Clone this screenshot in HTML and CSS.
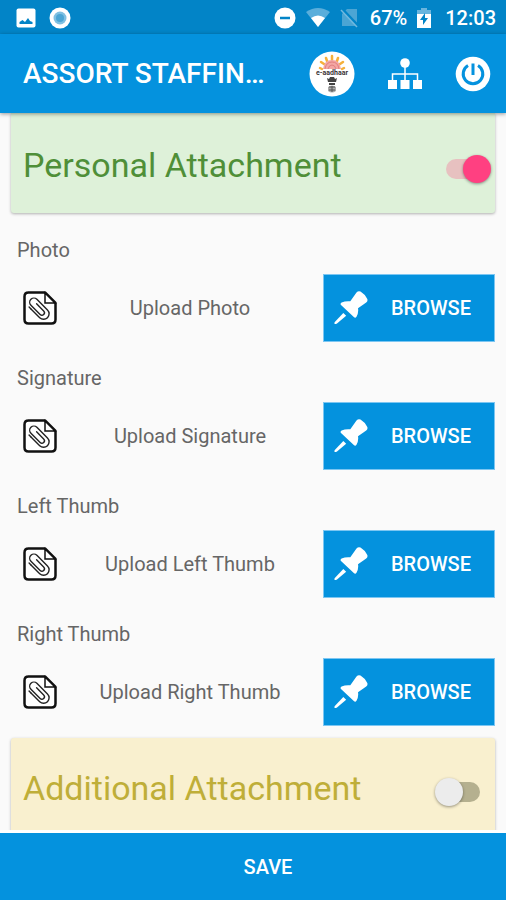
FILE: index.html
```html
<!DOCTYPE html>
<html lang="en">
<head>
<meta charset="utf-8">
<meta name="viewport" content="width=device-width, initial-scale=1">
<title>Attachments</title>
<link rel="stylesheet" href="styles.css">
</head>
<body>
<svg class="sprite" aria-hidden="true">
  <symbol id="file" viewBox="0 0 34 34">
    <path d="M5 1.500H22L32.500 12V28.500Q32.500 32.500 28.500 32.500H5.500Q1.500 32.500 1.500 28.500V5.500Q1.500 1.500 5.500 1.500Z" fill="#fff" stroke="#111" stroke-width="2.500" stroke-linejoin="round"/>
    <path d="M22 2V12H32Z" fill="#fff" stroke="#111" stroke-width="1.500"/>
    <g transform="translate(16 17.500) rotate(-45)" fill="none" stroke="#222" stroke-width="1.400" stroke-linecap="round">
      <path d="M-6-5V7A5.500 5.500 0 0 0 5 7V-8A4.200 4.200 0 0 0-3.400-8V5A2.500 2.500 0 0 0 1.600 5V-5"/>
      <path d="M-6-5V-8"/>
    </g>
  </symbol>
  <symbol id="pin" viewBox="0 0 34 34">
    <path d="M22.500 1.600Q24.200-.6 26.500.5Q30.800 3 33.300 8Q34 10.300 32.200 11.500L24 17.200Q24.800 21.500 22.500 25.800Q21.300 27.400 19.800 26L7 14Q5.800 12.500 7.600 11.500Q11.500 9.800 16.300 10.300Z" fill="#fff"/>
    <path d="M9.300 22L12.200 24.700L3 32.500Q-.2 34.200.6 31.200Z" fill="#fff"/>
  </symbol>
</svg>

<div class="status">
  <div class="status-group">
    <svg width="20" height="20" viewBox="0 0 20 20"><rect x=".5" y=".5" width="19" height="19" rx="2" fill="#fff"/><path d="M3.500 16V14L6.500 12L9 14L12 10L14 13L16.500 14V16Z" fill="#0284c7"/></svg>
    <svg width="22" height="22" viewBox="0 0 22 22"><circle cx="11" cy="11" r="10.500" fill="#fff"/><circle cx="11" cy="11" r="6.500" fill="#7fc0e2"/><circle cx="11" cy="11" r="4" fill="#4ba5d4"/></svg>
  </div>
  <div class="status-group status-right">
    <svg width="22" height="22" viewBox="0 0 22 22"><circle cx="11" cy="11" r="10.500" fill="#fff"/><path d="M6 11H16" stroke="#0284c7" stroke-width="2.500"/></svg>
    <svg width="24" height="20" viewBox="0 0 24 20"><path d="M0 4Q12-4 24 4L12 19Z" fill="#5aaedb"/><path d="M5 10Q12 5 19 10L12 19Z" fill="#fff"/></svg>
    <svg width="20" height="20" viewBox="0 0 20 20"><path d="M7 1H17V18H2V6Z" fill="#4ba5d4"/><path d="M2 1L19 19" stroke="#0284c7" stroke-width="3"/><path d="M1 2L17 19" stroke="#72b9df" stroke-width="1.500"/></svg>
    <span>67%</span>
    <svg width="14" height="20" viewBox="0 0 14 20"><path d="M0 2H4V0H10V2H14V7H0Z" fill="#69b5de"/><path d="M0 6H14V20H0Z" fill="#fff"/><path d="M8 5L3 12H6V17L11 10H8Z" fill="#0284c7"/></svg>
    <span>12:03</span>
  </div>
</div>

<header class="appbar">
  <h1>ASSORT STAFFIN…</h1>
  <nav class="actions">
    <button type="button" aria-label="e-aadhaar">
      <svg width="46" height="46" viewBox="0 0 46 46"><circle cx="23" cy="23" r="22.500" fill="#fff"/>
        <g stroke="#f5b03a" stroke-width="2.500" stroke-linecap="round"><path d="M11 17L13 18M12 11L15 13M17 7L18 10M23 5V9M29 7L28 10M34 11L31 13M35 17L33 18"/></g>
        <path d="M14 18Q15 9 23 9Q31 9 32 18Z" fill="#f3a7a3"/>
        <path d="M16 18Q17 11 23 11Q29 11 30 18M19 18Q20 14 23 14Q26 14 27 18" fill="none" stroke="#e27f80" stroke-width="1"/>
        <text class="logo-text" x="23" y="24" text-anchor="middle">e-aadhaar</text>
        <path d="M18 27L20 28L21 26H25L26 28L28 27L27 31H19ZM20 32H26V34H20Z" fill="#444"/>
        <path d="M19 36Q23 33 27 36V40Q23 43 19 40Z" fill="#aaa"/><path d="M20 36H26M20 39H26M23 35V41" stroke="#555" stroke-width="1"/>
      </svg>
    </button>
    <button type="button" aria-label="Organisation">
      <svg width="36" height="32" viewBox="0 0 36 32"><circle cx="18" cy="5" r="4.800" fill="#fff"/><path d="M18 8V22M5.500 22V16H30.500V22" fill="none" stroke="#fff" stroke-width="1.500"/><path d="M1 22H10V31H1ZM13.500 22H22.500V31H13.500ZM26 22H35V31H26Z" fill="#fff"/></svg>
    </button>
    <button type="button" aria-label="Log out">
      <svg width="36" height="36" viewBox="0 0 36 36"><circle cx="18" cy="18" r="17.300" fill="#fff"/><path d="M18 7.500V19M13 9.500A9.800 9.800 0 1 0 23 9.500" fill="none" stroke="#0492de" stroke-width="3"/></svg>
    </button>
  </nav>
</header>

<main class="content">
  <section class="card personal">
    <label for="personal">Personal Attachment</label>
    <input class="switch" type="checkbox" role="switch" id="personal" checked>
  </section>

  <section class="field">
    <h2>Photo</h2>
    <div class="row"><svg class="file"><use href="#file"/></svg><span class="hint">Upload Photo</span><button type="button" class="browse"><svg class="pin"><use href="#pin"/></svg><span>BROWSE</span></button></div>
  </section>
  <section class="field">
    <h2>Signature</h2>
    <div class="row"><svg class="file"><use href="#file"/></svg><span class="hint">Upload Signature</span><button type="button" class="browse"><svg class="pin"><use href="#pin"/></svg><span>BROWSE</span></button></div>
  </section>
  <section class="field">
    <h2>Left Thumb</h2>
    <div class="row"><svg class="file"><use href="#file"/></svg><span class="hint">Upload Left Thumb</span><button type="button" class="browse"><svg class="pin"><use href="#pin"/></svg><span>BROWSE</span></button></div>
  </section>
  <section class="field">
    <h2>Right Thumb</h2>
    <div class="row"><svg class="file"><use href="#file"/></svg><span class="hint">Upload Right Thumb</span><button type="button" class="browse"><svg class="pin"><use href="#pin"/></svg><span>BROWSE</span></button></div>
  </section>

  <section class="card additional">
    <label for="additional">Additional Attachment</label>
    <input class="switch" type="checkbox" role="switch" id="additional">
  </section>
</main>

<button type="button" class="save">SAVE</button>
</body>
</html>
```
FILE: styles.css
```css
* { box-sizing: border-box; }

body {
  margin: 0;
  height: 100vh;
  display: flex;
  flex-direction: column;
  background: #fafafa;
  color: #666;
  font-family: Roboto, "Liberation Sans", sans-serif;
  font-size: 20px;
  line-height: 24px;
}

svg { display: block; flex: none; }
.sprite { position: absolute; width: 0; height: 0; }
button { border: 0; padding: 0; background: none; color: #fff; font: inherit; cursor: pointer; }

.status {
  flex: none;
  height: 34px;
  padding: 2px 10px 0 16px;
  display: flex;
  align-items: center;
  justify-content: space-between;
  background: #0284c7;
  color: #fff;
  font-weight: 500;
}
.status-group { display: flex; align-items: center; gap: 13px; }
.status-right { gap: 10px; }
.status-right span + svg { margin-right: 4px; }

.appbar {
  flex: none;
  height: 79px;
  padding: 0 15px 0 23px;
  display: flex;
  align-items: center;
  justify-content: space-between;
  background: #0492de;
  color: #fff;
  box-shadow: 0 1px 4px rgba(0, 0, 0, .4);
  z-index: 1;
}
.appbar h1 { margin: 0; font-size: 28px; line-height: 36px; font-weight: 500; white-space: nowrap; }
.actions { display: flex; align-items: center; gap: 32px; }
.logo-text { font-size: 7px; font-weight: 700; fill: #3c3538; }

.content {
  flex: 1;
  min-height: 0;
  padding: 0 11px;
  overflow-y: auto;
  scrollbar-width: none;
}

.card {
  display: flex;
  align-items: center;
  justify-content: space-between;
  height: 100px;
  padding: 0 4px 0 12px;
  font-size: 34px;
  line-height: 40px;
  box-shadow: 0 1px 3px rgba(0, 0, 0, .3);
}
.card label { padding-bottom: 8px; }
.personal { padding-top: 12px; margin-bottom: 13px; background: #def1d9; color: #4f8f38; border-radius: 0 0 3px 3px; }
.additional { height: 108px; background: #f9f0cf; color: #bfae38; border-radius: 3px; }

.switch {
  appearance: none;
  position: relative;
  flex: none;
  width: 56px;
  height: 28px;
  margin: 0;
}
.switch::before {
  content: "";
  position: absolute;
  inset: 4px 11px;
  border-radius: 10px;
  background: #b5b08f;
}
.switch::after {
  content: "";
  position: absolute;
  top: 0;
  left: 0;
  width: 28px;
  height: 28px;
  border-radius: 50%;
  background: #ececec;
  box-shadow: 0 1px 3px rgba(0, 0, 0, .4);
}
.switch:checked::before { background: #e7c1c0; }
.switch:checked::after { left: 28px; background: #ff4081; }

.field { margin-bottom: 12px; }
.field h2 { margin: 0; padding: 12px 6px; font-size: 20px; line-height: 24px; font-weight: 400; }
.row { display: flex; align-items: center; padding-left: 12px; }
.file { width: 34px; height: 34px; }
.hint { flex: 1; text-align: center; }

.browse {
  width: 172px;
  height: 68px;
  padding: 0 23px 0 10px;
  display: flex;
  align-items: center;
  justify-content: space-between;
  background: #0492de;
  border: 1px solid #7cc6f2;
  font-weight: 500;
}
.pin { width: 34px; height: 34px; }

.save {
  flex: none;
  height: 70px;
  border-top: 3px solid #fff;
  background: #0492de;
  font-weight: 500;
  padding-left: 30px;
}
```
